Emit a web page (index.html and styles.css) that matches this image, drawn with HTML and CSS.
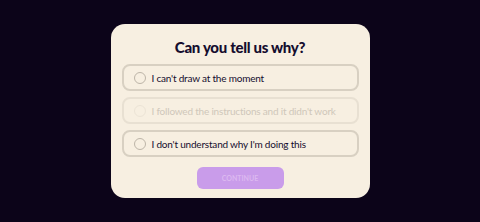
FILE: index.html
```html
<!DOCTYPE html>
<html lang="en">
<head>
    <meta charset="UTF-8">
    <title>Feedback</title>
    <link rel="stylesheet" href="styles.css">
</head>
<body>

<div class="card">
    <h1 class="title">Can you tell us why?</h1>
    <div class="options">
        <label class="option">
            <span class="radio"></span>
            <span>I can't draw at the moment</span>
        </label>
        <label class="option faded">
            <span class="radio"></span>
            <span>I followed the instructions and it didn't work</span>
        </label>
        <label class="option">
            <span class="radio"></span>
            <span>I don't understand why I'm doing this</span>
        </label>
    </div>
    <button class="continue" disabled>CONTINUE</button>
</div>

</body>
</html>
```

FILE: styles.css
```css
body {
    margin: 0;
    font-family: Lato, "Noto Sans", sans-serif;
    background: #0c0419;
    height: 222px;
    display: flex;
    justify-content: center;
    align-items: flex-start;
}

.card {
    margin-top: 24px;
    width: 259px;
    height: 174px;
    box-sizing: border-box;
    background: #f7efe1;
    border-radius: 14px;
    padding: 13px 11px 0 11px;
    display: flex;
    flex-direction: column;
    align-items: center;
}

.title {
    margin: 0;
    font-size: 15px;
    font-weight: 900;
    letter-spacing: -0.3px;
    color: #150d2e;
    line-height: 20px;
}

.options {
    width: 100%;
    margin-top: 7px;
    display: flex;
    flex-direction: column;
    gap: 6px;
}

.option {
    height: 27px;
    box-sizing: border-box;
    border: 2px solid #d8d0c2;
    border-radius: 8px;
    display: flex;
    align-items: center;
    padding-left: 10px;
    gap: 6px;
    font-size: 10px;
    letter-spacing: -0.2px;
    color: #150d2e;
}

.radio {
    width: 12px;
    height: 12px;
    border: 1.5px solid #bdb5a8;
    border-radius: 50%;
    box-sizing: border-box;
    flex-shrink: 0;
}

.faded { color: #cfc7ba; border-color: #e8e0d2; }
.faded .radio { border-color: #ece4d6; }

.continue {
    margin-top: 10px;
    width: 87px;
    height: 22px;
    border: none;
    border-radius: 6px;
    background: #c99cea;
    color: #dcb8f0;
    font-family: inherit;
    font-size: 7px;
    font-weight: 700;
}
```
